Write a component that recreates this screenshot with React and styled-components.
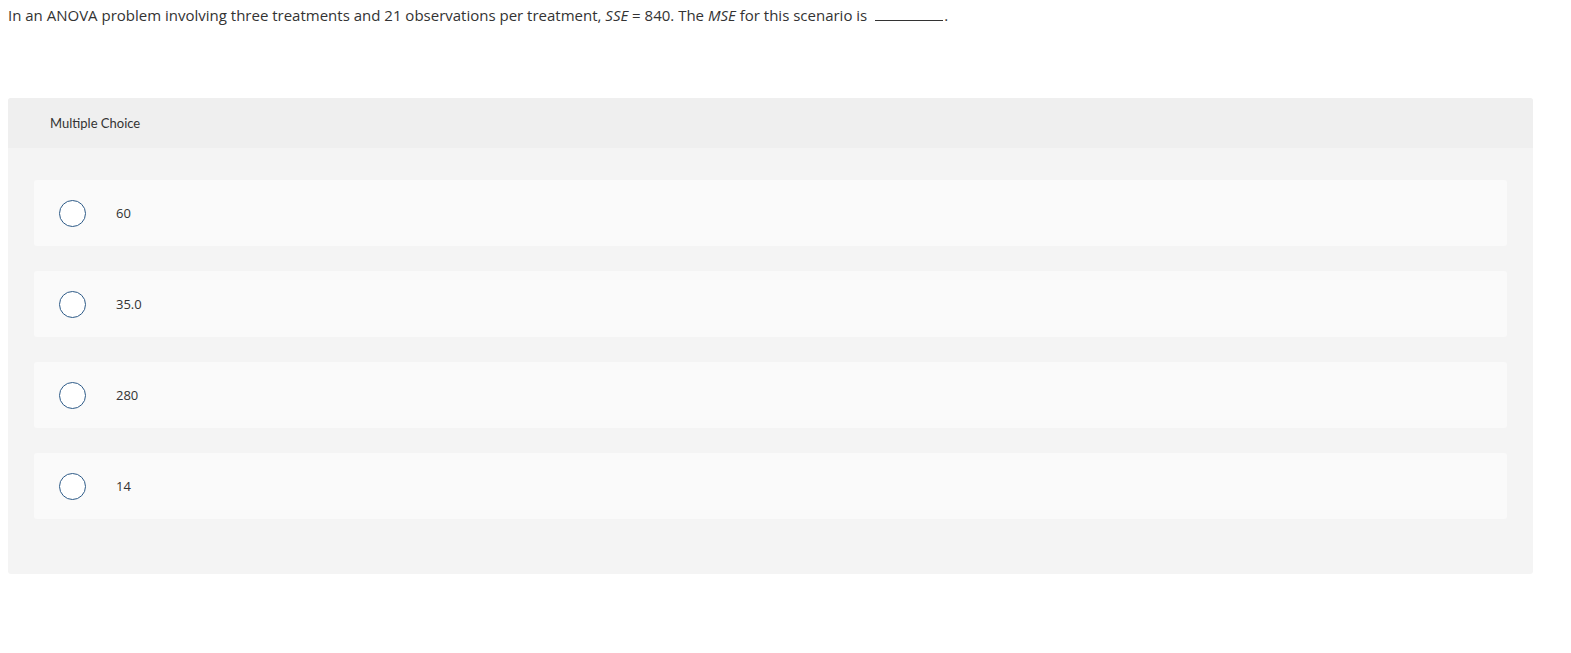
import React from "react"
import styled, { createGlobalStyle } from "styled-components"

const Global = createGlobalStyle`
    body {
        margin: 0;
        background: #fff;
        font-family: "Open Sans", "Lato", sans-serif;
        color: #333;
    }
`

const Page = styled.div`
    padding: 0 8px;
`

const Question = styled.p`
    margin: 0;
    padding-top: 5px;
    height: 98px;
    box-sizing: border-box;
    font-size: 15px;
    line-height: 20px;
    color: #333;

    & em {
        font-style: italic;
    }
`

const Blank = styled.span`
    display: inline-block;
    width: 68px;
    border-bottom: 1px solid #333;
    margin: 0 1px 0 4px;
    vertical-align: baseline;
`

const Panel = styled.div`
    width: 1525px;
    background: #f4f4f4;
    border-radius: 3px;
    overflow: hidden;
`

const Header = styled.div`
    height: 50px;
    background: #efefef;
    display: flex;
    align-items: center;
    padding-left: 42px;
    font-family: "Lato", sans-serif;
    font-size: 13px;
    color: #333;
`

const Options = styled.div`
    display: flex;
    flex-direction: column;
    gap: 25px;
    padding: 32px 26px 55px 26px;
`

const Option = styled.label`
    height: 66px;
    display: flex;
    align-items: center;
    padding-left: 25px;
    background: #fafafa;
    border-radius: 3px;
    font-size: 13px;
    color: #333;
    cursor: pointer;
`

const Radio = styled.span`
    width: 25px;
    height: 25px;
    border-radius: 50%;
    border: 1.5px solid #2d5a87;
    background: #fff;
    flex: none;
    margin-right: 30px;
`

const choices = ["60", "35.0", "280", "14"]

export default function App() {
    return (
        <Page>
            <Global />
            <Question>
                In an ANOVA problem involving three treatments and 21 observations per treatment,{" "}
                <em>SSE</em> = 840. The <em>MSE</em> for this scenario is <Blank />.
            </Question>
            <Panel>
                <Header>Multiple Choice</Header>
                <Options>
                    {choices.map(c => (
                        <Option key={c}>
                            <Radio />
                            {c}
                        </Option>
                    ))}
                </Options>
            </Panel>
        </Page>
    )
}
